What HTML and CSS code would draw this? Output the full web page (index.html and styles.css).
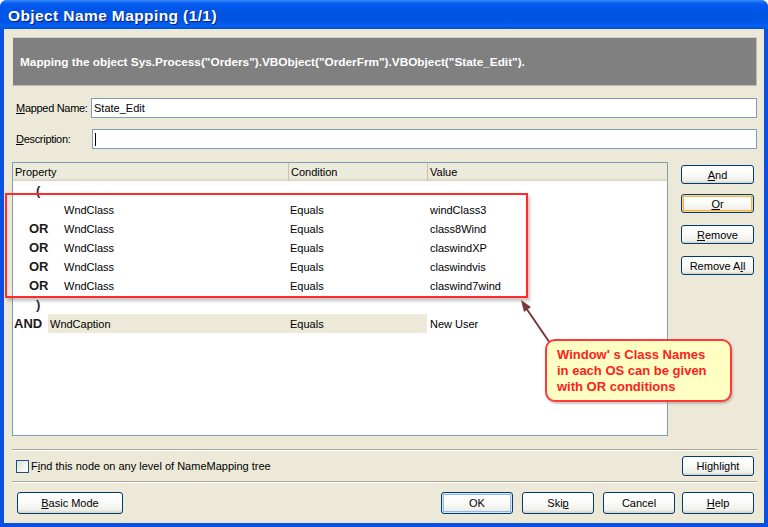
FILE: index.html
```html
<!DOCTYPE html>
<html>
<head>
<meta charset="utf-8">
<link rel="stylesheet" href="styles.css">
</head>
<body>
<div class="window">
  <div class="titlebar">Object Name Mapping (1/1)</div>
  <div class="client">
    <div class="banner">Mapping the object Sys.Process("Orders").VBObject("OrderFrm").VBObject("State_Edit").</div>
    <div class="field f1">
      <label class="lbl"><u>M</u>apped Name:</label>
      <div class="input">State_Edit</div>
    </div>
    <div class="field f2">
      <label class="lbl lbl2"><u>D</u>escription:</label>
      <div class="input"><span class="caret"></span></div>
    </div>
    <div class="main">
      <div class="table">
        <div class="thead">
          <div class="th c1">Property</div>
          <div class="th c2">Condition</div>
          <div class="th c3">Value</div>
        </div>
        <div class="row"><div class="c1 paren">(</div></div>
        <div class="row"><div class="c1 sub"><span class="op"></span><span>WndClass</span></div><div class="c2">Equals</div><div class="c3">windClass3</div></div>
        <div class="row"><div class="c1 sub"><span class="op">OR</span><span>WndClass</span></div><div class="c2">Equals</div><div class="c3">class8Wind</div></div>
        <div class="row"><div class="c1 sub"><span class="op">OR</span><span>WndClass</span></div><div class="c2">Equals</div><div class="c3">claswindXP</div></div>
        <div class="row"><div class="c1 sub"><span class="op">OR</span><span>WndClass</span></div><div class="c2">Equals</div><div class="c3">claswindvis</div></div>
        <div class="row"><div class="c1 sub"><span class="op">OR</span><span>WndClass</span></div><div class="c2">Equals</div><div class="c3">claswind7wind</div></div>
        <div class="row"><div class="c1 paren">)</div></div>
        <div class="row"><div class="c1 top"><span class="op">AND</span><span class="sel">WndCaption</span></div><div class="c2 selc">Equals</div><div class="c3">New User</div></div>
      </div>
      <div class="side">
        <button class="btn sbtn"><u>A</u>nd</button>
        <button class="btn sbtn hot"><u>O</u>r</button>
        <button class="btn sbtn"><u>R</u>emove</button>
        <button class="btn sbtn">Remove A<u>l</u>l</button>
      </div>
    </div>
    <div class="sep"></div>
    <div class="checkrow">
      <span class="check"></span>
      <span class="checklbl">F<u>i</u>nd this node on any level of NameMapping tree</span>
      <button class="btn hl">Hi<u>g</u>hlight</button>
    </div>
    <div class="sep sep2"></div>
    <div class="btnrow">
      <button class="btn basic"><u>B</u>asic Mode</button>
      <div class="grow"></div>
      <button class="btn bb def">OK</button>
      <button class="btn bb">Ski<u>p</u></button>
      <button class="btn bb">Cancel</button>
      <button class="btn bb help"><u>H</u>elp</button>
    </div>
  </div>

  <div class="redbox"></div>
  <svg class="arrow" width="40" height="52" viewBox="0 0 40 52">
    <line x1="33" y1="47" x2="5" y2="6" stroke="#7a3a3a" stroke-width="2"/>
    <polygon points="2,1 12,8 5,13" fill="#7a3a3a"/>
  </svg>
  <div class="callout">Window' s Class Names<br>in each OS can be given<br>with OR conditions</div>
</div>
</body>
</html>
```
FILE: styles.css
```css
html, body {
  margin: 0;
  padding: 0;
}
body {
  width: 768px;
  height: 527px;
  overflow: hidden;
  font-family: "Liberation Sans", Arial, sans-serif;
  font-size: 11px;
  color: #000;
}
.window {
  position: relative;
  width: 768px;
  height: 527px;
  background: #0a50e0;
  border-radius: 7px 7px 0 0;
  display: flex;
  flex-direction: column;
  box-sizing: border-box;
}
.titlebar {
  height: 29px;
  flex: none;
  border-radius: 7px 7px 0 0;
  background: linear-gradient(#3a8cff 0, #0a5ff0 3px, #0058ee 6px, #0054e3 14px, #0055e6 22px, #0561f0 26px, #0050d8 29px);
  color: #fff;
  font-family: "Liberation Sans", Arial, sans-serif;
  font-weight: bold;
  font-size: 15.5px;
  letter-spacing: 0.4px;
  line-height: 31px;
  padding-left: 8px;
  text-shadow: 1px 1px 0 #0a1e80;
}
.client {
  flex: 1;
  margin: 0 4px 4px 4px;
  background: #ece9d8;
  padding: 8px 7px 0 8px;
  display: flex;
  flex-direction: column;
}
.banner {
  height: 47px;
  background: #808080;
  border: 1px solid #bdbab0;
  border-left-color: #e8e6dc;
  border-top-color: #d0cdc2;
  color: #fff;
  font-weight: bold;
  font-size: 11.8px;
  line-height: 48px;
  padding-left: 7px;
  flex: none;
  white-space: nowrap;
}
.field {
  display: flex;
  align-items: center;
  height: 20px;
  flex: none;
}
.f1 { margin-top: 12px; }
.f2 { margin-top: 11px; }
.lbl {
  width: 75px;
  padding-left: 4px;
  flex: none;
  white-space: nowrap;
  letter-spacing: -0.3px;
}
.lbl2 { width: 76px; }
.input {
  flex: 1;
  height: 18px;
  border: 1px solid #7f9db9;
  background: #fff;
  line-height: 18px;
  padding-left: 2px;
  display: flex;
  align-items: center;
}
.caret {
  display: inline-block;
  width: 1px;
  height: 13px;
  background: #000;
}
.main {
  margin-top: 13px;
  display: flex;
  height: 274px;
  flex: none;
}
.table {
  width: 654px;
  border: 1px solid #7f9db9;
  background: #fff;
  flex: none;
}
.thead {
  display: flex;
  height: 18px;
  background: linear-gradient(#ebeadb 0, #ebeadb 15px, #e2decd 16px, #d6d2c2 18px);
  line-height: 19px;
}
.th {
  box-sizing: border-box;
  padding-left: 2px;
}
.th.c2, .th.c3 {
  border-left: 1px solid #c7c5b2;
  padding-left: 2px;
}
.c1 { width: 275px; flex: none; box-sizing: border-box; }
.c2 { width: 139px; flex: none; box-sizing: border-box; padding-left: 2px; }
.c3 { flex: 1; box-sizing: border-box; padding-left: 3px; }
.row {
  display: flex;
  height: 19px;
  line-height: 20px;
}
.paren {
  padding-left: 23px;
  font-family: "Liberation Sans", Arial, sans-serif;
  font-weight: bold;
  font-size: 13px;
  color: #2a2a2a;
}
.sub { padding-left: 16px; display: flex; }
.sub .op { width: 35px; }
.op {
  flex: none;
  font-family: "Liberation Sans", Arial, sans-serif;
  font-weight: bold;
  font-size: 13px;
  color: #1a1a1a;
}
.top { padding-left: 1px; display: flex; }
.top .op { width: 34px; }
.sel {
  flex: 1;
  background: #ece9d8;
  padding-left: 2px;
}
.selc { background: #ece9d8; }
.side {
  margin-left: 13px;
  padding-top: 3px;
  display: flex;
  flex-direction: column;
  width: 73px;
}
.btn {
  font-family: "Liberation Sans", Arial, sans-serif;
  font-size: 11px;
  color: #000;
  border: 1px solid #003c74;
  border-radius: 3px;
  background: linear-gradient(#ffffff 0, #fcfcfb 40%, #f0f0ea 85%, #d6d0c5 100%);
  padding: 0;
  box-sizing: border-box;
  cursor: default;
}
.sbtn {
  width: 73px;
  height: 19px;
  margin-bottom: 12px;
}
.sbtn:first-child { margin-bottom: 10px; }
.hot {
  box-shadow: inset 0 0 0 1px #fbd690, inset 0 0 0 2px #f5b444;
}
.sep {
  margin-top: 13px;
  height: 1px;
  background: #aca899;
  border-bottom: 1px solid #fff;
  flex: none;
}
.sep2 { margin-top: 5px; }
.checkrow {
  display: flex;
  align-items: center;
  height: 20px;
  margin-top: 5px;
  flex: none;
}
.check {
  width: 11px;
  height: 11px;
  border: 1px solid #1c5180;
  background: linear-gradient(135deg, #dcdcd5 0, #f4f4f0 60%, #ffffff 100%);
  margin-left: 4px;
  flex: none;
}
.checklbl {
  margin-left: 2px;
  flex: 1;
}
.hl {
  width: 72px;
  height: 20px;
  margin-right: 3px;
}
.btnrow {
  display: flex;
  margin-top: 9px;
  height: 22px;
  flex: none;
}
.basic {
  width: 106px;
  height: 22px;
  margin-left: 5px;
}
.grow { flex: 1; }
.bb {
  width: 72px;
  height: 22px;
  margin-left: 9px;
}
.help { margin-left: 7px; margin-right: 3px; }
.def {
  box-shadow: inset 0 0 0 1px #cee7ff, inset 0 0 0 2px #98b8ea;
}
.redbox {
  position: absolute;
  left: 5px;
  top: 193px;
  width: 519px;
  height: 101px;
  border: 2px solid #ff2a2a;
  box-shadow: 2px 3px 3px rgba(90, 90, 90, 0.35);
}
.arrow {
  position: absolute;
  left: 519px;
  top: 299px;
}
.callout {
  position: absolute;
  left: 545px;
  top: 339px;
  width: 187px;
  height: 63px;
  border: 2px solid #ff3a3a;
  border-radius: 10px;
  background: #ffffc4;
  color: #ff2020;
  font-family: "Liberation Sans", Arial, sans-serif;
  font-weight: bold;
  font-size: 13px;
  line-height: 16px;
  padding: 6px 0 0 10px;
  box-sizing: border-box;
  box-shadow: 1px 2px 2px rgba(120, 100, 100, 0.35);
}
```
